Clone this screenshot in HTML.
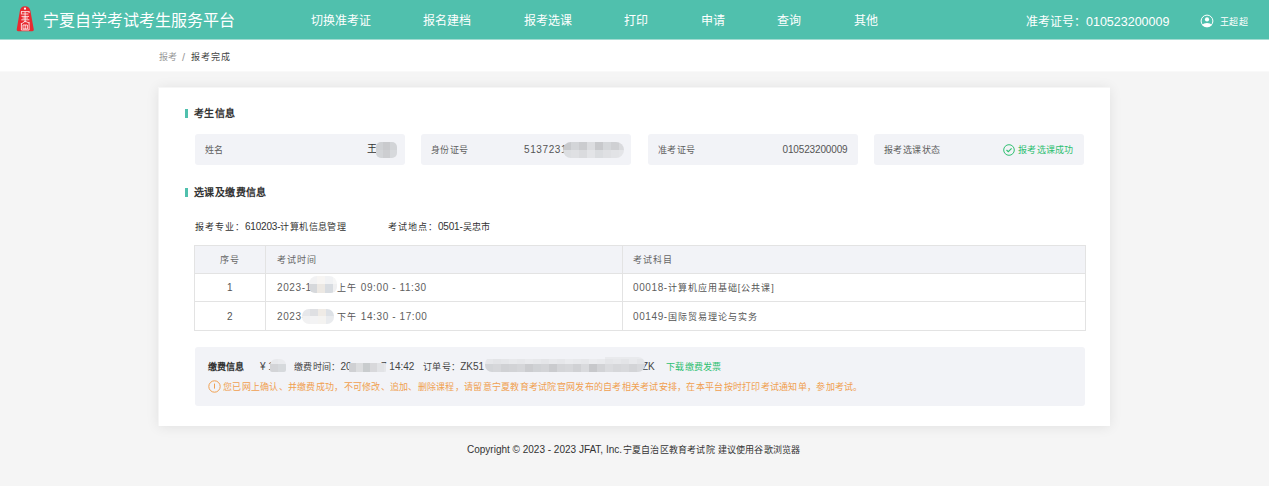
<!DOCTYPE html>
<html lang="zh-CN"><head><meta charset="utf-8">
<style>
*{margin:0;padding:0;box-sizing:border-box}
html,body{width:1269px;height:486px;overflow:hidden;background:#f5f5f5;font-family:"Liberation Sans",sans-serif;color:#333}
.a{position:absolute;white-space:nowrap}
#hdr{position:absolute;left:0;top:0;width:1269px;height:40px;background:#50c0ad;border-bottom:1px solid #a4dcd2}
#crumb{position:absolute;left:0;top:40px;width:1269px;height:32px;background:#fff;border-bottom:1px solid #f9f9f9}
#card{position:absolute;left:158px;top:87px;width:952px;height:339px;background:#fff;border-left:1px solid #f5f5f5;border-top:1px solid #f6f6f6;box-shadow:0 1px 12px rgba(0,0,0,.085)}
.nav{position:absolute;top:13px;font-size:12px;line-height:16px;color:#fff;white-space:nowrap}
.sec{position:absolute;font-size:10px;letter-spacing:.4px;font-weight:bold;color:#333;line-height:14px;white-space:nowrap}
.bar{position:absolute;width:3px;height:9px;background:#50c0ad}
.box{position:absolute;top:134px;height:31px;width:209.5px;background:#f2f3f7;border-radius:3px}
.lbl{position:absolute;left:10px;top:8.5px;font-size:9px;letter-spacing:.4px;line-height:14px;color:#606060;white-space:nowrap}
.val{position:absolute;right:10px;top:8px;font-size:10px;line-height:14px;color:#333;white-space:nowrap}
.mz{position:absolute;overflow:hidden;filter:blur(.5px)}.mz i{display:block}
.t{position:absolute;font-size:10px;line-height:14px;white-space:nowrap}
.c9{font-size:9px;letter-spacing:1px}.n{font-size:10px;letter-spacing:.6px;color:#606060}
.row{position:absolute;left:194px;width:892px;border:1px solid #e3e3e3;border-bottom:none}
.cell{position:absolute;top:0;bottom:0;border-left:1px solid #e3e3e3}
</style></head><body>
<div id="hdr">
<svg class="a" style="left:10px;top:0px" width="30" height="40" viewBox="0 0 30 40">
<path d="M15 6.3 C12 6.3 10.2 8.3 9.9 10.8 L6.7 29.6 Q6.5 31.3 8.2 31.3 L22.3 31.3 Q24 31.3 23.8 29.6 L20.4 10.8 C20.1 8.3 18 6.3 15 6.3 Z" fill="#e82a30"/>
<circle cx="15" cy="8.7" r="1.1" fill="#fff"/>
<g stroke="#fff" stroke-width="0.8" fill="none">
<path d="M11 11.6 H19.5 M11.4 11.6 V14.5 M19.1 11.6 V13 M12.2 14 H18.4 M11.5 16.4 H19 M12.5 18 H18 M11.3 19.8 H19.3 M15.1 11.6 V22.3"/>
<path d="M15.1 21.2 L11.4 24 M11.4 23 V30 M19.1 21.8 V30 M15.1 21.2 L19.1 23 M11.4 30 H19.1 M13 25 H17.4 V29 H13 Z M15.2 25 V29"/>
</g>
</svg>
<div class="a" style="left:43.2px;top:9.5px;font-size:16px;line-height:22px;color:#fff">宁夏自学考试考生服务平台</div>
<div class="nav" style="left:311px">切换准考证</div>
<div class="nav" style="left:423px">报名建档</div>
<div class="nav" style="left:524px">报考选课</div>
<div class="nav" style="left:624px">打印</div>
<div class="nav" style="left:701px">申请</div>
<div class="nav" style="left:777px">查询</div>
<div class="nav" style="left:854px">其他</div>
<div class="nav" style="left:1026px;top:14px">准考证号：<span style="font-size:12.5px">010523200009</span></div>
<svg class="a" style="left:1200px;top:14px" width="14" height="14" viewBox="0 0 14 14">
<circle cx="7" cy="7" r="5.9" fill="none" stroke="#fff" stroke-width="1"/>
<circle cx="7" cy="5.4" r="2.1" fill="#fff"/>
<path d="M2.2 11.2 C3.6 8.3 10.4 8.3 11.8 11.2 C9.5 13.6 4.5 13.6 2.2 11.2 Z" fill="#fff"/>
</svg>
<div class="a" style="left:1219.5px;top:14.5px;font-size:9px;letter-spacing:.6px;line-height:14px;color:#fff">王超超</div>
</div>
<div id="crumb">
<div class="t" style="left:158.7px;top:9.5px;font-size:9px;letter-spacing:.7px;color:#999">报考</div>
<div class="t" style="left:182px;top:9.5px;font-size:11px;color:#999">/</div>
<div class="t" style="left:191px;top:9.5px;font-size:9px;letter-spacing:1.1px;color:#444">报考完成</div>
</div>
<div id="card"></div>
<div class="bar" style="left:185px;top:109px"></div>
<div class="sec" style="left:194px;top:106.5px">考生信息</div>
<div class="box" style="left:195px"><div class="lbl">姓名</div><div class="val" style="right:28px">王</div></div>
<div class="box" style="left:421px"><div class="lbl">身份证号</div><div class="val n" style="left:103px;right:auto;top:9px;color:#555">5137231</div></div>
<div class="box" style="left:648px"><div class="lbl">准考证号</div><div class="val" style="letter-spacing:-.15px;top:9px;color:#555">010523200009</div></div>
<div class="box" style="left:874px"><div class="lbl">报考选课状态</div>
<svg class="a" style="left:129px;top:9.5px" width="12" height="12" viewBox="0 0 12 12"><circle cx="6" cy="6" r="5.3" fill="none" stroke="#2fbf71" stroke-width="1"/><path d="M3.5 6 L5.3 7.7 L8.6 4.4" fill="none" stroke="#2fbf71" stroke-width="1.1"/></svg>
<div class="val" style="font-size:9px;color:#2fbf71;right:10px;top:9px;letter-spacing:.2px">报考选课成功</div></div>
<div class="bar" style="left:185px;top:188px"></div>
<div class="sec" style="left:194px;top:185.5px">选课及缴费信息</div>
<div class="t" style="left:195px;top:219.5px"><span class="c9">报考专业：</span><span style="letter-spacing:-.2px">610203-</span><span class="c9" style="letter-spacing:.4px">计算机信息管理</span></div>
<div class="t" style="left:388px;top:219.5px"><span class="c9">考试地点：</span><span style="letter-spacing:-.2px">0501-</span><span class="c9" style="letter-spacing:.4px">吴忠市</span></div>

<div class="row" style="top:245px;height:28px;background:#f2f3f7"><div class="cell" style="left:70px"></div><div class="cell" style="left:427px"></div></div>
<div class="row" style="top:273px;height:28px"><div class="cell" style="left:70px"></div><div class="cell" style="left:427px"></div></div>
<div class="row" style="top:301px;height:30px;border-bottom:1px solid #e3e3e3"><div class="cell" style="left:70px"></div><div class="cell" style="left:427px"></div></div>
<div class="t c9" style="left:220px;top:253px;color:#666">序号</div>
<div class="t c9" style="left:277px;top:253px;color:#666">考试时间</div>
<div class="t c9" style="left:633px;top:253px;color:#666">考试科目</div>
<div class="t n" style="color:#555;left:227px;top:281px">1</div>
<div class="t n" style="color:#555;left:227px;top:309.5px">2</div>
<div class="t" style="color:#555;left:277px;top:281px"><span class="n">2023-1</span></div>
<div class="t" style="color:#555;left:337px;top:281px"><span class="c9">上午</span> <span style="margin-left:1px" class="n">09:00 - 11:30</span></div>
<div class="t" style="color:#555;left:277px;top:309.5px"><span class="n">2023-</span></div>
<div class="t" style="color:#555;left:337px;top:309.5px"><span class="c9">下午</span> <span style="margin-left:1px" class="n">14:30 - 17:00</span></div>
<div class="t" style="color:#555;left:633px;top:281px"><span class="n">00018-</span><span class="c9">计算机应用基础[公共课]</span></div>
<div class="t" style="color:#555;left:633px;top:309.5px"><span class="n">00149-</span><span class="c9">国际贸易理论与实务</span></div>

<div class="a" style="left:195px;top:347px;width:890px;height:59px;background:#f2f3f7;border-radius:3px"></div>
<div class="t" style="left:208px;top:359.5px;font-size:9px;font-weight:bold;color:#333;letter-spacing:0px">缴费信息</div>
<div class="t" style="left:260px;top:359.5px;font-size:10px;color:#444">¥ 1</div>
<div class="t" style="left:294px;top:359.5px;font-size:9px;letter-spacing:.3px;color:#444">缴费时间：<span style="font-size:10px;letter-spacing:0">20</span></div>
<div class="t" style="left:381px;top:359.5px;font-size:10px;color:#444">7 14:42</div>
<div class="t" style="left:423px;top:359.5px;font-size:9px;letter-spacing:.3px;color:#444">订单号：<span style="font-size:10px;letter-spacing:0">ZK51</span></div>
<div class="t" style="left:642px;top:359.5px;font-size:10px;color:#444">ZK</div>
<div class="t" style="left:666px;top:359.5px;font-size:9px;letter-spacing:.3px;color:#2fbf71">下载缴费发票</div>
<svg class="a" style="left:208px;top:380px" width="13" height="13" viewBox="0 0 13 13"><circle cx="6.5" cy="6.5" r="5.7" fill="none" stroke="#f0a050" stroke-width="1"/><path d="M6.5 3.6 V8.6" stroke="#f0a050" stroke-width="1"/></svg>
<div class="t" style="left:223px;top:380px;font-size:9px;letter-spacing:.27px;color:#f0a050">您已网上确认、并缴费成功，不可修改、追加、删除课程，请留意宁夏教育考试院官网发布的自考相关考试安排，在本平台按时打印考试通知单，参加考试。</div>
<div class="t" style="left:467px;top:442.5px;font-size:10px;letter-spacing:0;color:#333">Copyright © 2023 - 2023 JFAT, Inc. <span style="font-size:9px;letter-spacing:.2px;margin-left:-2px">宁夏自治区教育考试院 建议使用谷歌浏览器</span></div>
<div class="mz" style="left:376px;top:142px;width:21px;height:16px;border-radius:5px;"><div style="display:flex;height:8px"><i style="flex:0 0 7px;background:#cfd1d4"></i><i style="flex:0 0 7px;background:#c9cacd"></i><i style="flex:0 0 7px;background:#d2d4d7"></i></div><div style="display:flex;height:8px"><i style="flex:0 0 7px;background:#d3d5d8"></i><i style="flex:0 0 7px;background:#cdced1"></i><i style="flex:0 0 7px;background:#d7d9dc"></i></div></div>
<div class="mz" style="left:563px;top:142px;width:61px;height:16px;border-radius:8px;"><div style="display:flex;height:8px"><i style="flex:0 0 8px;background:#c8cacd"></i><i style="flex:0 0 8px;background:#d3d5d8"></i><i style="flex:0 0 8px;background:#cbcccf"></i><i style="flex:0 0 8px;background:#dcdde0"></i><i style="flex:0 0 8px;background:#c8c9cc"></i><i style="flex:0 0 8px;background:#d5d7da"></i><i style="flex:0 0 8px;background:#cfd0d3"></i><i style="flex:0 0 8px;background:#d9dadd"></i></div><div style="display:flex;height:8px"><i style="flex:0 0 8px;background:#dcdee1"></i><i style="flex:0 0 8px;background:#dfe0e3"></i><i style="flex:0 0 8px;background:#dadbde"></i><i style="flex:0 0 8px;background:#e3e4e7"></i><i style="flex:0 0 8px;background:#dadcdf"></i><i style="flex:0 0 8px;background:#dfe0e3"></i><i style="flex:0 0 8px;background:#e2e3e6"></i><i style="flex:0 0 8px;background:#e4e5e8"></i></div></div>
<div class="mz" style="left:309px;top:276px;width:28px;height:17px;border-radius:8px 8px 6px 6px;"><div style="display:flex;height:8px"><i style="flex:0 0 8px;background:#f2f2f3"></i><i style="flex:0 0 8px;background:#f7f5f3"></i><i style="flex:0 0 8px;background:#f1f2f4"></i><i style="flex:0 0 8px;background:#f6f6f6"></i></div><div style="display:flex;height:9px"><i style="flex:0 0 8px;background:#d6d8db"></i><i style="flex:0 0 8px;background:#ece8e3"></i><i style="flex:0 0 8px;background:#d8dce1"></i><i style="flex:0 0 8px;background:#f0f0f1"></i></div></div>
<div class="mz" style="left:302px;top:309px;width:32px;height:15px;border-radius:7px;"><div style="display:flex;height:7px"><i style="flex:0 0 8px;background:#e6e7ea"></i><i style="flex:0 0 8px;background:#dfe0e3"></i><i style="flex:0 0 8px;background:#efebe6"></i><i style="flex:0 0 8px;background:#dde1e6"></i></div><div style="display:flex;height:8px"><i style="flex:0 0 8px;background:#f1f1f2"></i><i style="flex:0 0 8px;background:#f3f3f4"></i><i style="flex:0 0 8px;background:#f4f3f1"></i><i style="flex:0 0 8px;background:#e9ebee"></i></div></div>
<div class="mz" style="left:270px;top:359px;width:16px;height:13px;border-radius:6px 6px 2px 2px;"><div style="display:flex;height:5px"><i style="flex:0 0 8px;background:#e8e9ec"></i><i style="flex:0 0 8px;background:#eaebee"></i></div><div style="display:flex;height:8px"><i style="flex:0 0 8px;background:#d3d4d7"></i><i style="flex:0 0 8px;background:#d6d9dc"></i></div></div>
<div class="mz" style="left:349px;top:363px;width:37px;height:9px;border-radius:1px;"><div style="display:flex;height:9px"><i style="flex:0 0 7px;background:#cfd0d3"></i><i style="flex:0 0 7px;background:#dcdddf"></i><i style="flex:0 0 7px;background:#c9ccce"></i><i style="flex:0 0 7px;background:#d8d8db"></i><i style="flex:0 0 7px;background:#e2e3e6"></i><i style="flex:0 0 7px;background:#e6e7ea"></i></div></div>
<div class="mz" style="left:485px;top:357px;width:160px;height:15px;border-radius:7px;"><div style="display:flex;height:2px"><i style="flex:0 0 8px;background:#f2f3f7"></i><i style="flex:0 0 8px;background:#f2f3f7"></i><i style="flex:0 0 8px;background:#f2f3f7"></i><i style="flex:0 0 8px;background:#f2f3f7"></i><i style="flex:0 0 8px;background:#f2f3f7"></i><i style="flex:0 0 8px;background:#f2f3f7"></i><i style="flex:0 0 8px;background:#f2f3f7"></i><i style="flex:0 0 8px;background:#f2f3f7"></i><i style="flex:0 0 8px;background:#f2f3f7"></i><i style="flex:0 0 8px;background:#f2f3f7"></i><i style="flex:0 0 8px;background:#f2f3f7"></i><i style="flex:0 0 8px;background:#f2f3f7"></i><i style="flex:0 0 8px;background:#f2f3f7"></i><i style="flex:0 0 8px;background:#f2f3f7"></i><i style="flex:0 0 8px;background:#f2f3f7"></i><i style="flex:0 0 8px;background:#e9eaed"></i><i style="flex:0 0 8px;background:#e9eaed"></i><i style="flex:0 0 8px;background:#e9eaed"></i><i style="flex:0 0 8px;background:#e9eaed"></i><i style="flex:0 0 8px;background:#e9eaed"></i></div><div style="display:flex;height:5px"><i style="flex:0 0 8px;background:#e6e7ea"></i><i style="flex:0 0 8px;background:#e3e4e7"></i><i style="flex:0 0 8px;background:#e5e6e9"></i><i style="flex:0 0 8px;background:#e8e9ec"></i><i style="flex:0 0 8px;background:#e6e7ea"></i><i style="flex:0 0 8px;background:#e9eaed"></i><i style="flex:0 0 8px;background:#e7e8eb"></i><i style="flex:0 0 8px;background:#e4e5e8"></i><i style="flex:0 0 8px;background:#e8e9ec"></i><i style="flex:0 0 8px;background:#e6e7ea"></i><i style="flex:0 0 8px;background:#eaebee"></i><i style="flex:0 0 8px;background:#e8e9ec"></i><i style="flex:0 0 8px;background:#e6e7ea"></i><i style="flex:0 0 8px;background:#ebecef"></i><i style="flex:0 0 8px;background:#e9eaed"></i><i style="flex:0 0 8px;background:#e4e5e8"></i><i style="flex:0 0 8px;background:#e6e7ea"></i><i style="flex:0 0 8px;background:#e3e4e7"></i><i style="flex:0 0 8px;background:#e8e9ec"></i><i style="flex:0 0 8px;background:#e4e5e8"></i></div><div style="display:flex;height:8px"><i style="flex:0 0 8px;background:#d3d5d8"></i><i style="flex:0 0 8px;background:#d6d7da"></i><i style="flex:0 0 8px;background:#d0d1d4"></i><i style="flex:0 0 8px;background:#d2d3d6"></i><i style="flex:0 0 8px;background:#d5d6d9"></i><i style="flex:0 0 8px;background:#cbcccf"></i><i style="flex:0 0 8px;background:#d0d2d5"></i><i style="flex:0 0 8px;background:#d3d4d7"></i><i style="flex:0 0 8px;background:#cacbce"></i><i style="flex:0 0 8px;background:#d4d5d8"></i><i style="flex:0 0 8px;background:#d6d7da"></i><i style="flex:0 0 8px;background:#d0d1d4"></i><i style="flex:0 0 8px;background:#d9dadd"></i><i style="flex:0 0 8px;background:#c7c8cb"></i><i style="flex:0 0 8px;background:#d2d3d6"></i><i style="flex:0 0 8px;background:#dadbde"></i><i style="flex:0 0 8px;background:#d6d7da"></i><i style="flex:0 0 8px;background:#d8d9dc"></i><i style="flex:0 0 8px;background:#d3d4d7"></i><i style="flex:0 0 8px;background:#d8d9dc"></i></div></div>
</body></html>
